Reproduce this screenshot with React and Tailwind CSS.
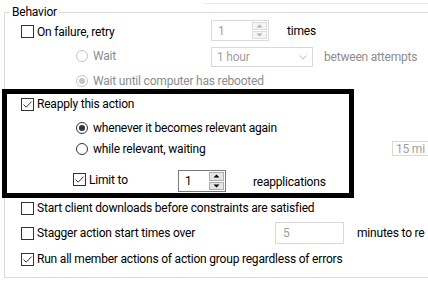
import React from 'react';

const CheckBox = ({ checked }) => (
    <span className="w-[13px] h-[13px] border border-[#333333] bg-white flex items-center justify-center shrink-0">
        {checked && (
            <svg width="11" height="11" viewBox="0 0 11 11">
                <path d="M1.5 5.5 L4.2 8.2 L9.6 2.6" fill="none" stroke="#333333" strokeWidth="1" />
            </svg>
        )}
    </span>
);

const Radio = ({ checked, disabled }) => (
    <span
        className={`w-[12px] h-[12px] rounded-full border flex items-center justify-center shrink-0 bg-white ${
            disabled ? 'border-[#c4c4c4]' : 'border-[#333333]'
        }`}
    >
        {checked && <span className={`w-[6px] h-[6px] rounded-full ${disabled ? 'bg-[#c4c4c4]' : 'bg-[#333333]'}`} />}
    </span>
);

const Arrow = ({ up, color }) => (
    <svg width="7" height="4" viewBox="0 0 7 4">
        <path d={up ? 'M0.5 3.5 L3.5 0.5 L6.5 3.5 Z' : 'M0.5 0.5 L3.5 3.5 L6.5 0.5 Z'} fill={color} />
    </svg>
);

const SpinBox = ({ value, disabled, className }) => (
    <div className={`flex h-full border bg-white ${disabled ? 'border-[#d9d9d9] text-[#a0a0a0]' : 'border-[#7a7a7a] text-black'} ${className}`}>
        <span className="flex-1 pl-[6px] flex items-center">{value}</span>
        <div className="w-[17px] flex flex-col p-px gap-px">
            <span className={`flex-1 border flex items-center justify-center ${disabled ? 'border-[#dcdcdc] bg-[#f4f4f4]' : 'border-[#adadad] bg-[#e5e5e5]'}`}>
                <Arrow up color={disabled ? '#b0b0b0' : '#000000'} />
            </span>
            <span className={`flex-1 border flex items-center justify-center ${disabled ? 'border-[#dcdcdc] bg-[#f4f4f4]' : 'border-[#adadad] bg-[#e5e5e5]'}`}>
                <Arrow color={disabled ? '#b0b0b0' : '#000000'} />
            </span>
        </div>
    </div>
);

const App = () => {
    return (
        <div className="relative w-[428px] h-[293px] overflow-hidden bg-white text-black text-[12px] leading-[16px] tracking-[-0.2px] font-['Roboto',sans-serif]">
            <div className="h-px mt-[3px] ml-[205px] bg-[#e8e8e8]" />

            <fieldset className="ml-[4px] w-[520px] border border-[#dcdcdc] pb-[10px]">
                <legend className="ml-[5px] px-[2px]">Behavior</legend>

                {/* on failure */}
                <div className="h-[21px] flex items-center pl-[16px]">
                    <div className="w-[190px] flex items-center gap-[3px] pt-[2px]">
                        <CheckBox />
                        <span>On failure, retry</span>
                    </div>
                    <SpinBox value="1" disabled className="w-[58px]" />
                    <span className="ml-[18px]">times</span>
                </div>

                <div className="mt-[6px] h-[20px] flex items-center pl-[71px]">
                    <div className="w-[135px] flex items-center gap-[5px] text-[#8c8c8c] -mt-[2px]">
                        <Radio disabled />
                        <span>Wait</span>
                    </div>
                    <div className="w-[102px] h-full border border-[#d9d9d9] flex items-center justify-between pl-[5px] pr-[5px] text-[#a0a0a0]">
                        <span>1 hour</span>
                        <svg width="8" height="5" viewBox="0 0 8 5">
                            <path d="M0.5 0.5 L4 4 L7.5 0.5" fill="none" stroke="#b8b8b8" strokeWidth="1" />
                        </svg>
                    </div>
                    <span className="ml-[11px] text-[#8c8c8c]">between attempts</span>
                </div>

                <div className="mt-[6px] h-[16px] flex items-center gap-[5px] pl-[71px] text-[#8c8c8c]">
                    <Radio checked disabled />
                    <span>Wait until computer has rebooted</span>
                </div>

                {/* reapply */}
                <div className="mt-[7px] h-[16px] flex items-center gap-[3px] pl-[16px]">
                    <CheckBox checked />
                    <span>Reapply this action</span>
                </div>

                <div className="mt-[8px] h-[16px] flex items-center gap-[5px] pl-[71px]">
                    <Radio checked />
                    <span>whenever it becomes relevant again</span>
                </div>

                <div className="mt-[4px] h-[17px] flex items-center pl-[71px]">
                    <div className="w-[316px] flex items-center gap-[5px]">
                        <Radio />
                        <span>while relevant, waiting</span>
                    </div>
                    <div className="w-[60px] h-[15px] border border-[#d9d9d9] flex items-center pl-[3px] text-[#a0a0a0]">
                        15 mi
                    </div>
                </div>

                <div className="mt-[13px] h-[22px] flex items-center pl-[68px]">
                    <div className="w-[105px] flex items-center gap-[3px] -mt-[3px]">
                        <CheckBox checked />
                        <span>Limit to</span>
                    </div>
                    <SpinBox value="1" className="w-[48px]" />
                    <span className="ml-[27px] mt-[2px]">reapplications</span>
                </div>

                {/* other options */}
                <div className="mt-[8px] h-[16px] flex items-center gap-[3px] pl-[16px]">
                    <CheckBox />
                    <span>Start client downloads before constraints are satisfied</span>
                </div>

                <div className="mt-[6px] h-[22px] flex items-center pl-[16px]">
                    <div className="w-[254px] flex items-center gap-[3px]">
                        <CheckBox />
                        <span>Stagger action start times over</span>
                    </div>
                    <div className="w-[69px] h-full border border-[#d9d9d9] flex items-center pl-[7px] text-[#a0a0a0]">5</div>
                    <span className="ml-[13px] whitespace-nowrap">minutes to re</span>
                </div>

                <div className="mt-[7px] h-[16px] flex items-center gap-[3px] pl-[16px]">
                    <CheckBox checked />
                    <span>Run all member actions of action group regardless of errors</span>
                </div>
            </fieldset>

            {/* highlight annotation drawn over the dialog */}
            <div className="absolute left-[2px] top-[89px] w-[352px] h-[109px] border-[5px] border-black pointer-events-none" />
        </div>
    );
};

export default App;
